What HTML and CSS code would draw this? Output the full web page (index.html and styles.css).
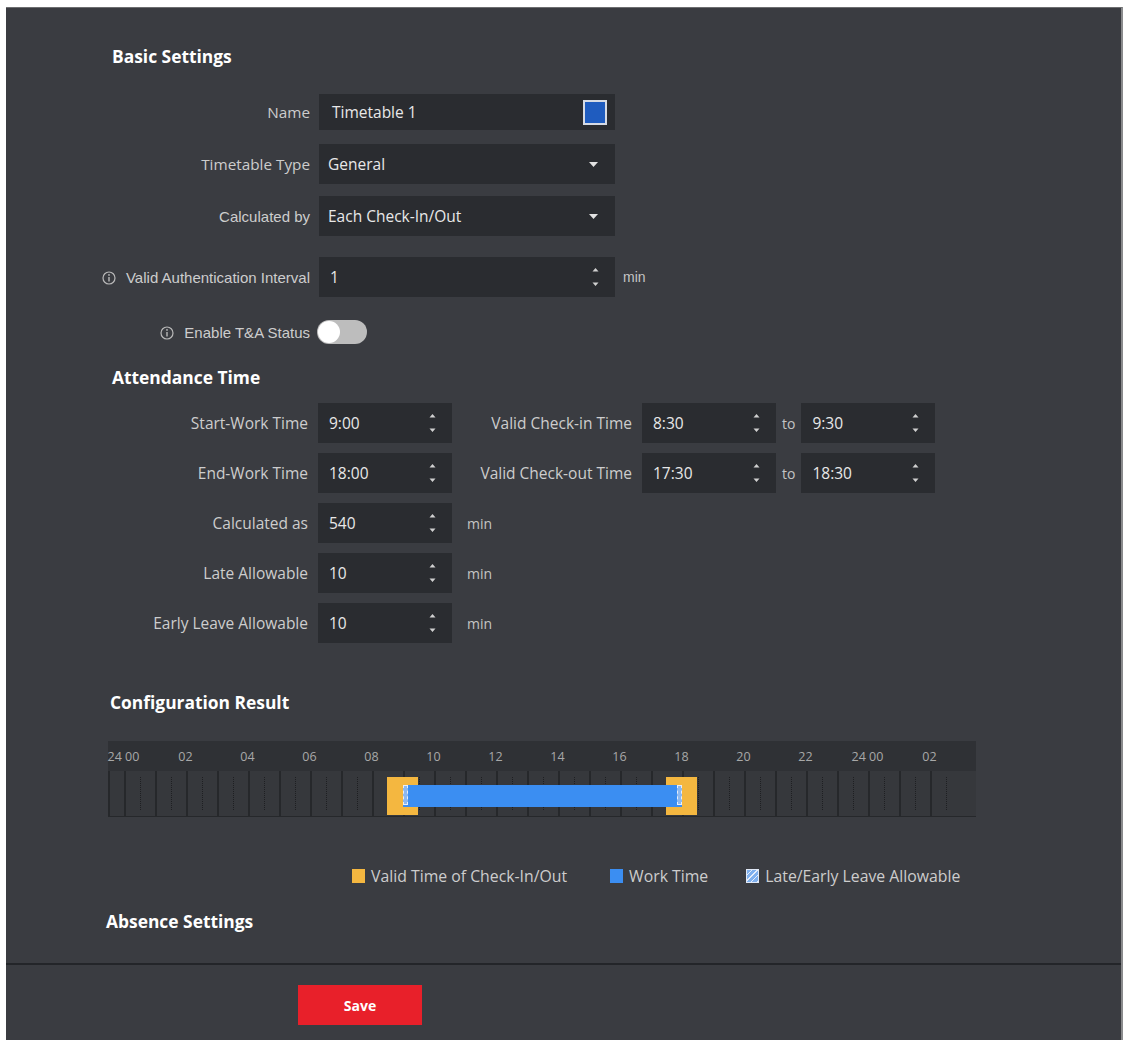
FILE: index.html
```html
<!DOCTYPE html>
<html lang="en">
<head>
    <meta charset="UTF-8">
    <meta name="viewport" content="width=device-width, initial-scale=1.0">
    <title>Timetable Settings</title>
    <link rel="stylesheet" href="styles.css">
</head>
<body>
    <div class="panel">
        <h2 class="section-title">Basic Settings</h2>

        <div class="row row-name">
            <span class="label">Name</span>
            <div class="field field-wide">
                <span class="value">Timetable 1</span>
                <span class="color-pick"></span>
            </div>
        </div>

        <div class="row row-type">
            <span class="label">Timetable Type</span>
            <div class="field field-wide field-select">
                <span class="value">General</span>
                <svg class="caret" width="9" height="5" viewBox="0 0 9 5"><path d="M0 0H9L4.5 5Z" fill="#e2e2e2"/></svg>
            </div>
        </div>

        <div class="row row-calc">
            <span class="label label-arial">Calculated by</span>
            <div class="field field-wide field-select">
                <span class="value">Each Check-In/Out</span>
                <svg class="caret" width="9" height="5" viewBox="0 0 9 5"><path d="M0 0H9L4.5 5Z" fill="#e2e2e2"/></svg>
            </div>
        </div>

        <div class="row row-interval">
            <span class="label label-arial">
                <svg class="info" width="14" height="14" viewBox="0 0 14 14"><circle cx="7" cy="7" r="6" fill="none" stroke="#b9b9b9" stroke-width="1.2"/><path d="M7 6v4.5" stroke="#b9b9b9" stroke-width="1.4"/><circle cx="7" cy="3.9" r="0.9" fill="#b9b9b9"/></svg>
                Valid Authentication Interval
            </span>
            <div class="field field-wide">
                <span class="value">1</span>
                <svg class="spin" width="7" height="22" viewBox="0 0 7 22"><path d="M3.5 2L6.5 5.5H0.5Z M3.5 20L6.5 16.5H0.5Z" fill="#d0d0d0"/></svg>
            </div>
            <span class="unit unit-arial">min</span>
        </div>

        <div class="row row-toggle">
            <span class="label label-arial">
                <svg class="info" width="14" height="14" viewBox="0 0 14 14"><circle cx="7" cy="7" r="6" fill="none" stroke="#b9b9b9" stroke-width="1.2"/><path d="M7 6v4.5" stroke="#b9b9b9" stroke-width="1.4"/><circle cx="7" cy="3.9" r="0.9" fill="#b9b9b9"/></svg>
                Enable T&amp;A Status
            </span>
            <span class="toggle"><span class="knob"></span></span>
        </div>

        <h2 class="section-title title-attendance">Attendance Time</h2>

        <div class="att-rows">
            <div class="row">
                <span class="label">Start-Work Time</span>
                <div class="field field-small">
                    <span class="value">9:00</span>
                    <svg class="spin" width="7" height="22" viewBox="0 0 7 22"><path d="M3.5 2L6.5 5.5H0.5Z M3.5 20L6.5 16.5H0.5Z" fill="#d0d0d0"/></svg>
                </div>
                <span class="label label-col2">Valid Check-in Time</span>
                <div class="field field-small">
                    <span class="value">8:30</span>
                    <svg class="spin" width="7" height="22" viewBox="0 0 7 22"><path d="M3.5 2L6.5 5.5H0.5Z M3.5 20L6.5 16.5H0.5Z" fill="#d0d0d0"/></svg>
                </div>
                <span class="to">to</span>
                <div class="field field-small">
                    <span class="value">9:30</span>
                    <svg class="spin" width="7" height="22" viewBox="0 0 7 22"><path d="M3.5 2L6.5 5.5H0.5Z M3.5 20L6.5 16.5H0.5Z" fill="#d0d0d0"/></svg>
                </div>
            </div>
            <div class="row">
                <span class="label">End-Work Time</span>
                <div class="field field-small">
                    <span class="value">18:00</span>
                    <svg class="spin" width="7" height="22" viewBox="0 0 7 22"><path d="M3.5 2L6.5 5.5H0.5Z M3.5 20L6.5 16.5H0.5Z" fill="#d0d0d0"/></svg>
                </div>
                <span class="label label-col2">Valid Check-out Time</span>
                <div class="field field-small">
                    <span class="value">17:30</span>
                    <svg class="spin" width="7" height="22" viewBox="0 0 7 22"><path d="M3.5 2L6.5 5.5H0.5Z M3.5 20L6.5 16.5H0.5Z" fill="#d0d0d0"/></svg>
                </div>
                <span class="to">to</span>
                <div class="field field-small">
                    <span class="value">18:30</span>
                    <svg class="spin" width="7" height="22" viewBox="0 0 7 22"><path d="M3.5 2L6.5 5.5H0.5Z M3.5 20L6.5 16.5H0.5Z" fill="#d0d0d0"/></svg>
                </div>
            </div>
            <div class="row">
                <span class="label">Calculated as</span>
                <div class="field field-small">
                    <span class="value">540</span>
                    <svg class="spin" width="7" height="22" viewBox="0 0 7 22"><path d="M3.5 2L6.5 5.5H0.5Z M3.5 20L6.5 16.5H0.5Z" fill="#d0d0d0"/></svg>
                </div>
                <span class="unit unit-wide">min</span>
            </div>
            <div class="row">
                <span class="label">Late Allowable</span>
                <div class="field field-small">
                    <span class="value">10</span>
                    <svg class="spin" width="7" height="22" viewBox="0 0 7 22"><path d="M3.5 2L6.5 5.5H0.5Z M3.5 20L6.5 16.5H0.5Z" fill="#d0d0d0"/></svg>
                </div>
                <span class="unit unit-wide">min</span>
            </div>
            <div class="row">
                <span class="label">Early Leave Allowable</span>
                <div class="field field-small">
                    <span class="value">10</span>
                    <svg class="spin" width="7" height="22" viewBox="0 0 7 22"><path d="M3.5 2L6.5 5.5H0.5Z M3.5 20L6.5 16.5H0.5Z" fill="#d0d0d0"/></svg>
                </div>
                <span class="unit unit-wide">min</span>
            </div>
        </div>

        <h2 class="section-title title-config">Configuration Result</h2>

        <div class="timeline">
            <div class="tl-head">
                <span>24 00</span><span>02</span><span>04</span><span>06</span><span>08</span><span>10</span><span>12</span>
                <span>14</span><span>16</span><span>18</span><span>20</span><span>22</span><span>24 00</span><span>02</span>
            </div>
            <div class="tl-body">
                <div class="tl-grid" id="tl-grid"><div class="tl-cell tl-half"></div></div>
                <!-- hours are placed at (h + 0.5) * 31px -->
                <div class="tl-valid" style="left: 279px; width: 31px;"></div>
                <div class="tl-valid" style="left: 558px; width: 31px;"></div>
                <div class="tl-work" style="left: 294.5px; width: 279px;"></div>
                <div class="tl-allow" style="left: 294.5px;"></div>
                <div class="tl-allow" style="left: 568.5px;"></div>
            </div>
        </div>

        <div class="legend">
            <span class="legend-item legend-first"><span class="swatch swatch-valid"></span>Valid Time of Check-In/Out</span>
            <span class="legend-item"><span class="swatch swatch-work"></span>Work Time</span>
            <span class="legend-item"><span class="swatch swatch-allow"></span>Late/Early Leave Allowable</span>
        </div>

        <h2 class="section-title title-absence">Absence Settings</h2>

        <div class="divider"></div>

        <div class="footer">
            <button class="save-button">Save</button>
        </div>
    </div>

    <script>
        // 27 full hour cells after the leading half hour
        const grid = document.getElementById('tl-grid');
        for (let h = 0; h < 27; h++) {
            const cell = document.createElement('div');
            cell.className = 'tl-cell';
            grid.appendChild(cell);
        }
    </script>
</body>
</html>
```

FILE: styles.css
```css
body {
    margin: 0;
    padding: 7px 3px 3px 6px;
    background: #ffffff;
    font-family: 'Open Sans', 'Noto Sans', sans-serif;
    color: #cfcfcf;
}
.panel {
    background: #3a3c41;
    height: 1033px;
    box-sizing: border-box;
    padding-top: 38px;
    border-right: 2px solid #8a8b8d;
    border-top: 1px solid #6d6e70;
}
.section-title {
    margin: 0 0 0 106px;
    font-size: 17.4px;
    line-height: 20px;
    font-weight: 700;
    color: #ffffff;
}
.title-attendance {
    margin-top: 23px;
}
.title-config {
    margin-top: 49px;
    margin-left: 104px;
}
.title-absence {
    margin-top: 26px;
    margin-left: 100px;
}
.row {
    display: flex;
    align-items: center;
}
.label {
    width: 304px;
    margin-right: 9px;
    flex: none;
    text-align: right;
    font-size: 15.3px;
    color: #cdcdcd;
    white-space: nowrap;
}
.label-arial {
    font-family: 'Liberation Sans', Arial, sans-serif;
    font-size: 15px;
}
.info {
    vertical-align: -2px;
    margin-right: 6px;
}
.field {
    display: flex;
    align-items: center;
    justify-content: space-between;
    box-sizing: border-box;
    height: 40px;
    padding: 0 16px 0 11px;
    background: #2a2c30;
    color: #e8e8e8;
    font-size: 15.5px;
    flex: none;
}
.field-wide {
    width: 296px;
}
.field-small {
    width: 134px;
}
.field-select {
    padding-left: 9px;
    padding-right: 17px;
}
.row-name {
    margin-top: 28px;
}
.row-name .field {
    height: 36px;
    padding-right: 8px;
    padding-left: 13px;
}
.row-type {
    margin-top: 14px;
}
.row-calc {
    margin-top: 12px;
}
.row-interval {
    margin-top: 21px;
}
.row-toggle {
    margin-top: 23px;
    height: 24px;
}
.color-pick {
    width: 20px;
    height: 21px;
    background: #1f5cbf;
    border: 2px solid #d6dbe4;
}
.unit {
    margin-left: 8px;
    font-size: 14px;
    color: #c4c4c4;
}
.unit-arial {
    font-family: 'Liberation Sans', Arial, sans-serif;
}
.unit-wide {
    margin-left: 15px;
}
.toggle {
    display: flex;
    align-items: center;
    width: 50px;
    height: 24px;
    margin-left: -2px;
    border-radius: 12px;
    background: #bdbdbd;
    box-sizing: border-box;
    padding: 1px;
}
.knob {
    width: 22px;
    height: 22px;
    border-radius: 50%;
    background: #ffffff;
}
.att-rows {
    display: flex;
    flex-direction: column;
    gap: 10px;
    margin-top: 16px;
}
.att-rows .label {
    width: 302px;
    margin-right: 10px;
    font-size: 15.5px;
}
.att-rows .label-col2 {
    width: 180px;
    margin-right: 10px;
}
.to {
    margin: 0 6px;
    font-size: 14px;
    color: #c4c4c4;
}
.timeline {
    width: 868px;
    margin: 29px 0 0 102px;
}
.tl-head {
    display: flex;
    align-items: center;
    height: 30px;
    background: #2f3135;
    font-size: 12.5px;
    color: #a8a8a8;
}
.tl-head span {
    flex: none;
    width: 62px;
    text-align: center;
}
.tl-head span:first-child {
    margin-left: -15.5px;
}
.tl-body {
    position: relative;
    height: 46px;
    background: #36383c;
    border-bottom: 1px solid #26282b;
    box-sizing: border-box;
}
.tl-grid {
    display: flex;
    height: 100%;
}
.tl-cell {
    position: relative;
    flex: none;
    width: 31px;
    height: 100%;
    box-sizing: border-box;
    border-left: 2px solid #26282b;
}
.tl-cell::after {
    content: '';
    position: absolute;
    left: 14px;
    top: 6px;
    bottom: 6px;
    border-left: 1px dotted #1e1f22;
}
.tl-half {
    width: 15.5px;
}
.tl-half::after {
    display: none;
}
.tl-valid {
    position: absolute;
    top: 6px;
    height: 38px;
    background: #f4b740;
}
.tl-work {
    position: absolute;
    top: 14px;
    height: 22px;
    background: #3b8ef2;
}
.tl-allow {
    position: absolute;
    top: 14px;
    width: 5px;
    height: 20px;
    box-sizing: border-box;
    border: 1px dashed #e8eef8;
    background: #8cb8f0;
}
.legend {
    display: flex;
    align-items: center;
    gap: 38px;
    margin: 50px 0 0 346px;
    font-size: 15.8px;
    line-height: 18px;
    color: #cdcdcd;
}
.legend-item {
    display: flex;
    align-items: center;
}
.legend-first {
    margin-right: 5px;
}
.swatch {
    width: 13px;
    height: 14px;
    margin-right: 6px;
}
.swatch-valid {
    background: #f4b740;
}
.swatch-work {
    background: #3b8ef2;
}
.swatch-allow {
    box-sizing: border-box;
    border: 1px solid #dfe8f6;
    background: repeating-linear-gradient(135deg, #7fb0ee 0 3px, #e6eefa 3px 4px);
}
.divider {
    margin-top: 32px;
    height: 2px;
    background: #232529;
}
.footer {
    padding: 20px 0 0 292px;
}
.save-button {
    width: 124px;
    height: 40px;
    border: none;
    background: #e8202a;
    color: #ffffff;
    font-family: 'Open Sans', sans-serif;
    font-size: 14px;
    font-weight: 700;
    cursor: pointer;
}
```
